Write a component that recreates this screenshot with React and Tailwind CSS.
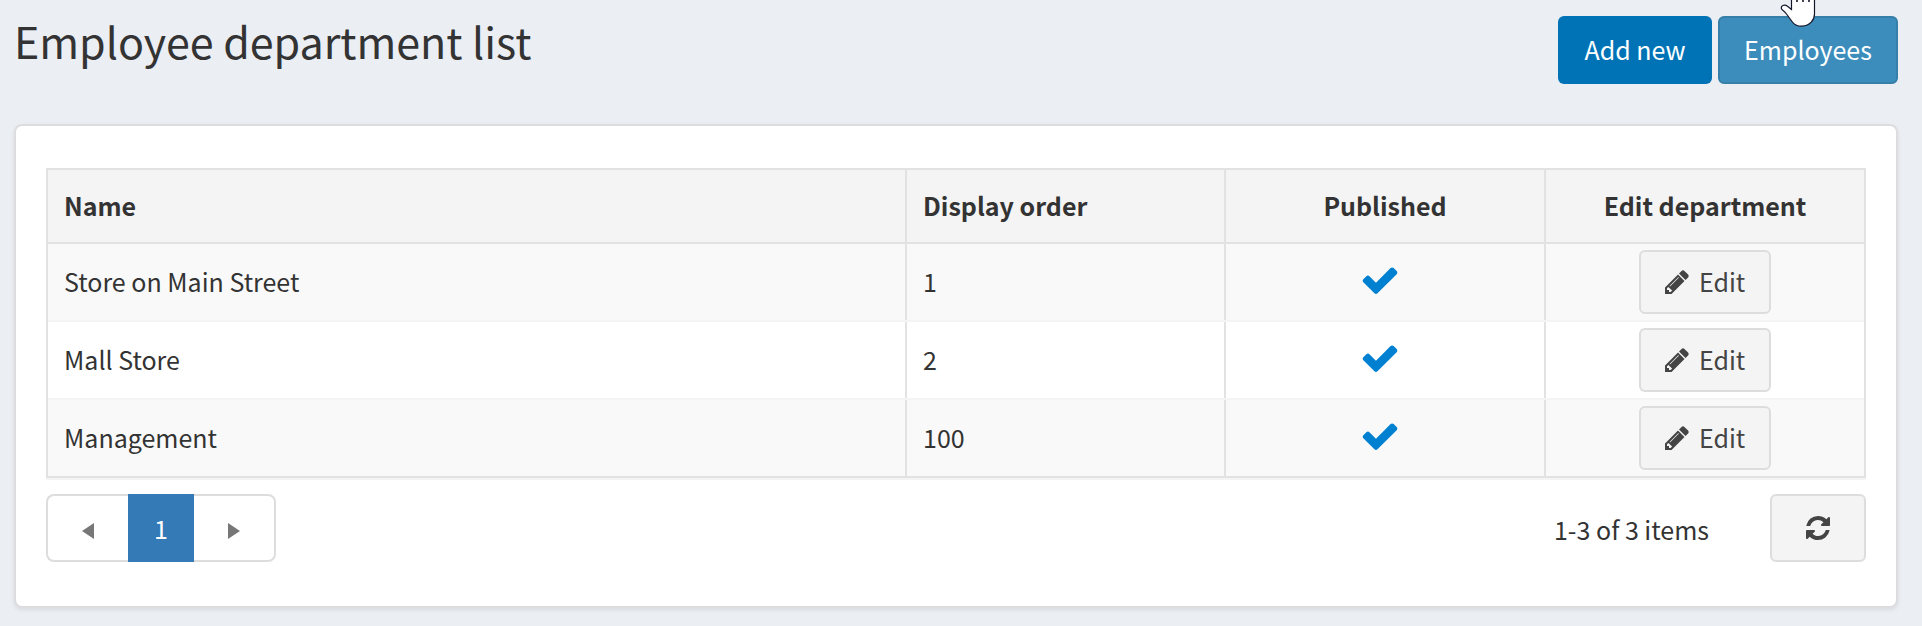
const Svg = ({ d, className, viewBox = '0 0 1792 1792' }) => (
  <svg viewBox={viewBox} className={className} fill="currentColor" aria-hidden="true"><path d={d} /></svg>
);
const PENCIL = 'M491 1536l91-91-235-235-91 91v107h128v128h107zm523-928q0-22-22-22-10 0-17 7l-542 542q-7 7-7 17 0 22 22 22 10 0 17-7l542-542q7-7 7-17zm-54-192l416 416-832 832h-416v-416zm683 96q0 53-37 90l-166 166-416-416 165-165q36-38 90-38 53 0 91 38l235 234q37 39 37 91z';
const CHECK = 'M1671 566q0 40-28 68l-724 724-136 136q-28 28-68 28t-68-28l-136-136-362-362q-28-28-28-68t28-68l136-136q28-28 68-28t68 28l294 295 656-657q28-28 68-28t68 28l136 136q28 28 28 68z';
const REFRESH = 'M1639 1056q0 5-1 7-64 268-268 434.5t-478 166.5q-146 0-282.5-55t-243.5-157l-129 129q-19 19-45 19t-45-19-19-45v-448q0-26 19-45t45-19h448q26 0 45 19t19 45-19 45l-137 137q71 66 161 102t187 36q134 0 250-65t186-179q11-17 53-117 8-23 30-23h192q13 0 22.5 9.5t9.5 22.5zm25-800v448q0 26-19 45t-45 19h-448q-26 0-45-19t-19-45 19-45l138-138q-148-137-349-137-134 0-250 65t-186 179q-11 17-53 117-8 23-30 23h-199q-13 0-22.5-9.5t-9.5-22.5v-7q65-268 270-434.5t480-166.5q146 0 284 55.5t245 156.5l130-129q19-19 45-19t45 19 19 45z';

const rows = [
  ['Store on Main Street', 1],
  ['Mall Store', 2],
  ['Management', 100],
];
const GRID = 'grid grid-cols-[859px_319px_320px_318px]';

export default function App() {
  return (
    <div className="relative h-[626px] w-[1922px] overflow-hidden bg-[#ebeef3] pl-[14px] pr-6 font-['Noto_Sans_CJK_SC',sans-serif] text-[25px] text-[#333]">
      <header className="flex h-[124px] items-start justify-between pt-4">
        <h1 className="text-[43px] leading-[48px] tracking-[-0.03px]">Employee department list</h1>
        <div className="flex gap-1.5">
          <button className="h-[68px] w-[154px] rounded-md bg-[#0073b7] text-white">Add new</button>
          <button className="h-[68px] w-[180px] rounded-md border-2 border-[#367fa9] bg-[#3c8dbc] text-white">Employees</button>
        </div>
      </header>

      <main className="h-[484px] rounded-lg border-2 border-[#dddddf] bg-white px-[30px] pt-[42px] shadow-[0_2px_4px_rgba(0,0,0,0.08)]">
        <div className="w-[1820px] border-2 border-[#e2e2e2] shadow-[0_2px_0_#f4f4f4]">
          <div className={GRID + ' h-[74px] border-b-2 border-[#e2e2e2] bg-[#f4f4f4] font-bold leading-[70px]'}>
            <div className="border-r-2 border-[#e2e2e2] pl-4">Name</div>
            <div className="border-r-2 border-[#e2e2e2] pl-4">Display order</div>
            <div className="border-r-2 border-[#e2e2e2] text-center">Published</div>
            <div className="text-center">Edit department</div>
          </div>
          {rows.map(([name, order], i) => (
            <div key={name} className={GRID + ' leading-[74px] ' + (i % 2 ? 'bg-white ' : 'bg-[#f9f9f9] ') + (i < 2 ? 'h-[78px] border-b-2 border-[#f4f4f4]' : 'h-[76px]')}>
              <div className="border-r-2 border-[#e2e2e2] pl-4">{name}</div>
              <div className="border-r-2 border-[#e2e2e2] pl-4">{order}</div>
              <div className="flex justify-center border-r-2 border-[#e2e2e2] pr-2.5 pt-4">
                <Svg d={CHECK} className="size-[40px] text-[#0080d0]" />
              </div>
              <div className="flex justify-center pt-1.5">
                <button className="flex h-16 w-[132px] items-center rounded-md border-2 border-[#ddd] bg-[#f4f4f4] pl-[22px] leading-[60px] text-[#444]">
                  <Svg d={PENCIL} className="size-7" />
                  <span className="-mt-0.5 ml-2">Edit</span>
                </button>
              </div>
            </div>
          ))}
        </div>

        <div className="mt-4 flex h-[68px] w-[1820px] items-center">
          <div className="flex h-[68px] w-[230px]">
            <button className="flex w-[82px] items-center justify-center rounded-l-lg border-2 border-r-0 border-[#ddd] text-[#777]">
              <Svg viewBox="0 0 12 16" d="M12 0v16L0 8z" className="mt-1.5 h-4 w-3" />
            </button>
            <button className="w-[66px] bg-[#337ab7] leading-[68px] text-white">1</button>
            <button className="flex w-[82px] items-center justify-center rounded-r-lg border-2 border-l-0 border-[#ddd] text-[#777]">
              <Svg viewBox="0 0 12 16" d="M0 0v16L12 8z" className="mt-1.5 h-4 w-3" />
            </button>
          </div>
          <span className="ml-auto mr-[61px] mt-0.5 leading-[72px]">1-3 of 3 items</span>
          <button className="flex h-[68px] w-24 items-center justify-center rounded-md border-2 border-[#ddd] bg-[#f4f4f4] text-[#444]">
            <Svg d={REFRESH} className="size-7" />
          </button>
        </div>
      </main>
      <svg className="absolute left-[1780px] top-0 h-7 w-9" viewBox="0 0 36 28">
        <path d="M11.500 -4V9.500L7.500 6.200C4.500 4 0.500 5.500 1.500 8.800C3 10.800 5 11.500 6.500 14L12 21.500C14.500 25 18 26.400 22 26.200C30 25.500 34.500 20 34.500 14V-4z" fill="#fff" stroke="#16162b" strokeWidth="1.200" />
        <path d="M17 -2V2M23 -2V2M29 -2V2" stroke="#16162b" strokeWidth="1.600" />
      </svg>
    </div>
  );
}
